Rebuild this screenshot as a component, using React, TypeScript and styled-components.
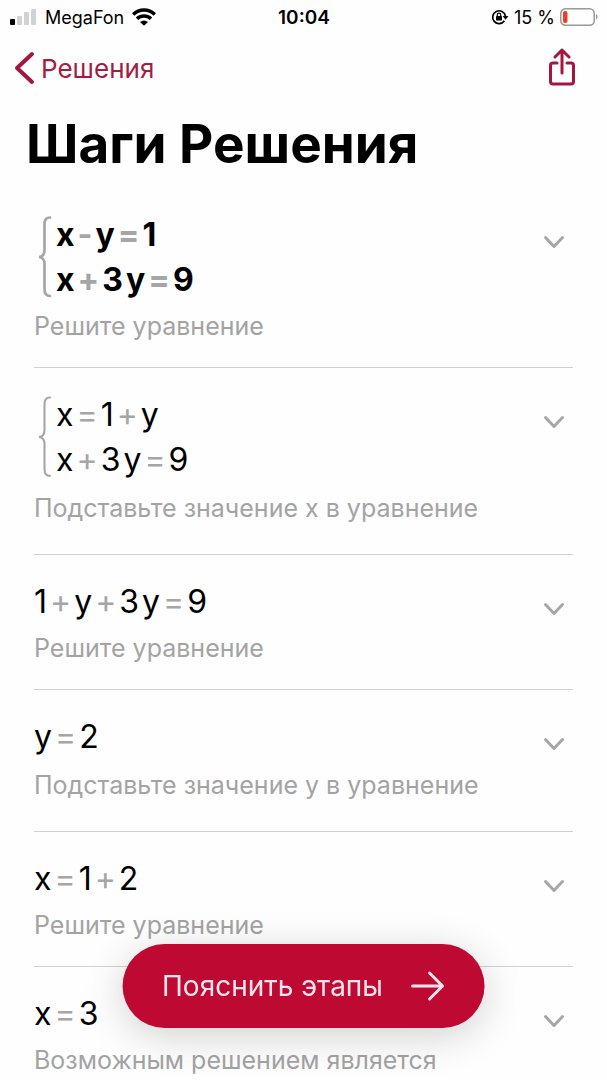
import React from "react";
import styled, { createGlobalStyle } from "styled-components";

const GlobalStyle = createGlobalStyle`
  * { box-sizing: border-box; }
  body {
    margin: 0;
    background: #fefefe;
    color: #000;
    font-family: Inter, "Liberation Sans", sans-serif;
  }
  button { font-family: inherit; }
`;

const Screen = styled.div`
  display: flex;
  flex-direction: column;
  height: 100vh;
`;

const StatusBar = styled.div`
  display: grid;
  grid-template-columns: 1fr auto 1fr;
  align-items: center;
  flex: none;
  height: 34px;
  padding: 0 9px 0 10px;
  font-size: 18px;
`;

const StatusGroup = styled.div<{ $end?: boolean }>`
  display: flex;
  align-items: center;
  justify-content: ${(p) => (p.$end ? "flex-end" : "flex-start")};
  gap: ${(p) => (p.$end ? 5 : 8)}px;
`;

const Clock = styled.time`
  font-weight: 600;
  font-size: 19px;
`;

const NavBar = styled.nav`
  display: flex;
  align-items: center;
  justify-content: space-between;
  flex: none;
  height: 68px;
  padding: 0 31px 0 14px;
`;

const BackLink = styled.a`
  display: flex;
  align-items: center;
  gap: 6px;
  color: #a41c42;
  font-size: 26px;
  text-decoration: none;
`;

const IconButton = styled.button`
  display: flex;
  padding: 0;
  border: 0;
  background: none;
  color: #a4163e;
  cursor: pointer;
`;

const Title = styled.h1`
  flex: none;
  margin: 0;
  padding: 10px 26px 12px;
  font-size: 53px;
  line-height: 64px;
  font-weight: 700;
`;

const Steps = styled.ol`
  flex: 1;
  min-height: 0;
  margin: 0;
  padding: 0 34px;
  list-style: none;
  overflow-y: auto;
  scrollbar-width: none;
`;

const Step = styled.li`
  display: flex;
  justify-content: space-between;
  padding: 28px 0 20px;
  border-bottom: 1px solid #d0d0d0;

  &:last-child { border-bottom: 0; }
`;

const System = styled.div`
  display: flex;
  gap: 4px;
  padding-left: 4px;
`;

const Lines = styled.div`
  display: flex;
  flex-direction: column;
  gap: 7px;
`;

const EquationLine = styled.div<{ $bold?: boolean }>`
  display: flex;
  gap: 3px;
  font-size: 32px;
  line-height: 38px;
  font-weight: ${(p) => (p.$bold ? 700 : 400)};
`;

const Operator = styled.span`
  color: #a6a6a6;
`;

const Hint = styled.p<{ $tall?: boolean }>`
  height: ${(p) => (p.$tall ? 47 : 40)}px;
  margin: 8px 0 0;
  color: #a3a3a3;
  font-size: 25px;
  line-height: ${(p) => (p.$tall ? 42 : 38)}px;
  white-space: nowrap;
`;

const ExpandButton = styled(IconButton)`
  align-self: flex-start;
  padding: 19px 8px;
  color: #a6a6a6;
`;

const ExplainButton = styled.button`
  position: fixed;
  bottom: 52px;
  left: 50%;
  transform: translateX(-50%);
  display: flex;
  align-items: center;
  gap: 28px;
  height: 84px;
  padding: 0 40px;
  border: 0;
  border-radius: 42px;
  background: #be0a32;
  box-shadow: 0 8px 40px rgba(0, 0, 0, 0.18);
  color: #ffe6ee;
  font-size: 28px;
  white-space: nowrap;
  cursor: pointer;
`;

const SignalIcon = () => (
  <svg width="27" height="18" viewBox="0 0 27 18" aria-hidden="true">
    <rect x="0" y="11" width="5" height="6" rx="1" fill="#000" />
    <rect x="7" y="8" width="5" height="9" rx="1" fill="#d2d2d2" />
    <rect x="14" y="4" width="5" height="13" rx="1" fill="#d2d2d2" />
    <rect x="21" y="1" width="5" height="16" rx="1" fill="#d2d2d2" />
  </svg>
);

const WifiIcon = () => (
  <svg width="24" height="18" viewBox="0 0 24 18" aria-hidden="true">
    <g fill="none" stroke="#000" strokeWidth="3.5">
      <path d="M1.2 6.4C7.2.6 16.8.6 22.8 6.4" />
      <path d="M5 10.8C9 7.1 15 7.1 19 10.8" />
    </g>
    <path d="M8 14Q12 11 16 14L12 17.8Z" fill="#000" />
  </svg>
);

const RotationLockIcon = () => (
  <svg width="18" height="16" viewBox="0 0 18 16" aria-hidden="true">
    <path d="M13.4 11.8A6.4 6.4 0 1 1 14.4 7" fill="none" stroke="#000" strokeWidth="1.7" />
    <path d="M11.6 7h5.8l-2.9 3.8z" fill="#000" />
    <rect x="5" y="7" width="6" height="4.4" rx=".6" fill="#000" />
    <path d="M6.3 7V5.8a1.7 1.7 0 0 1 3.4 0V7" fill="none" stroke="#000" strokeWidth="1.2" />
  </svg>
);

const BatteryIcon = () => (
  <svg width="38" height="18" viewBox="0 0 38 18" aria-hidden="true">
    <rect x=".8" y=".8" width="33.4" height="16.4" rx="4.5" fill="none" stroke="#999" strokeWidth="1.5" />
    <rect x="3" y="3" width="4.5" height="12" rx="2" fill="#e8402f" />
    <path d="M36 6.3v5.4q1.6-.8 1.6-2.7T36 6.3z" fill="#999" />
  </svg>
);

const BackIcon = () => (
  <svg width="21" height="34" viewBox="0 0 21 34" fill="none" stroke="#a4163e" strokeWidth="4" strokeLinecap="round" strokeLinejoin="round" aria-hidden="true">
    <path d="M18 3L3 17L18 31" />
  </svg>
);

const ShareIcon = () => (
  <svg width="28" height="40" viewBox="0 0 28 40" fill="none" stroke="currentColor" strokeWidth="3" strokeLinecap="round" strokeLinejoin="round" aria-hidden="true">
    <path d="M9 15H5Q2.500 15 2.500 17.500V33.500Q2.500 36 5 36H23Q25.500 36 25.500 33.500V17.500Q25.500 15 23 15H19" />
    <path d="M14 25V2M7 9L14 2L21 9" />
  </svg>
);

const ChevronIcon = () => (
  <svg width="22" height="14" viewBox="0 0 22 14" fill="none" stroke="currentColor" strokeWidth="3" strokeLinecap="round" strokeLinejoin="round" aria-hidden="true">
    <path d="M2.500 2.500L11 11.500L19.500 2.500" />
  </svg>
);

const ArrowIcon = () => (
  <svg width="34" height="32" viewBox="0 0 34 32" fill="none" stroke="currentColor" strokeWidth="3" strokeLinecap="round" strokeLinejoin="round" aria-hidden="true">
    <path d="M2 16H32M19 3L32 16L19 29" />
  </svg>
);

const BraceIcon = ({ bold }: { bold?: boolean }) => (
  <svg width="14" height="82" viewBox="0 0 14 82" fill="none" stroke="#a6a6a6" strokeWidth={bold ? 2.7 : 2.1} strokeLinecap="round" aria-hidden="true">
    <path d="M12 1.500Q6.500 1.500 6.500 8V34Q6.500 40.500 1 41Q6.500 41.500 6.500 48V73Q6.500 80 12 80" />
  </svg>
);

type StepData = { lines: string[]; hint: string; bold?: boolean; tall?: boolean };

const steps: StepData[] = [
  { lines: ["x - y = 1", "x + 3 y = 9"], hint: "Решите уравнение", bold: true },
  { lines: ["x = 1 + y", "x + 3 y = 9"], hint: "Подставьте значение x в уравнение", tall: true },
  { lines: ["1 + y + 3 y = 9"], hint: "Решите уравнение" },
  { lines: ["y = 2"], hint: "Подставьте значение y в уравнение", tall: true },
  { lines: ["x = 1 + 2"], hint: "Решите уравнение" },
  { lines: ["x = 3"], hint: "Возможным решением является" },
];

const Equation = ({ text, bold }: { text: string; bold?: boolean }) => (
  <EquationLine $bold={bold}>
    {text.split(" ").map((token, i) =>
      "+-=".includes(token) ? <Operator key={i}>{token}</Operator> : <span key={i}>{token}</span>
    )}
  </EquationLine>
);

export default function App() {
  return (
    <Screen>
      <GlobalStyle />
      <StatusBar>
        <StatusGroup>
          <SignalIcon />
          <span>MegaFon</span>
          <WifiIcon />
        </StatusGroup>
        <Clock>10:04</Clock>
        <StatusGroup $end>
          <RotationLockIcon />
          <span>15 %</span>
          <BatteryIcon />
        </StatusGroup>
      </StatusBar>
      <NavBar>
        <BackLink href="#solutions">
          <BackIcon />
          Решения
        </BackLink>
        <IconButton type="button" aria-label="Поделиться">
          <ShareIcon />
        </IconButton>
      </NavBar>
      <Title>Шаги Решения</Title>
      <Steps>
        {steps.map((step, i) => (
          <Step key={i}>
            <div>
              {step.lines.length > 1 ? (
                <System>
                  <BraceIcon bold={step.bold} />
                  <Lines>
                    {step.lines.map((line) => (
                      <Equation key={line} text={line} bold={step.bold} />
                    ))}
                  </Lines>
                </System>
              ) : (
                <Equation text={step.lines[0]} />
              )}
              <Hint $tall={step.tall}>{step.hint}</Hint>
            </div>
            <ExpandButton type="button" aria-label="Показать шаг">
              <ChevronIcon />
            </ExpandButton>
          </Step>
        ))}
      </Steps>
      <ExplainButton type="button">
        Пояснить этапы
        <ArrowIcon />
      </ExplainButton>
    </Screen>
  );
}
